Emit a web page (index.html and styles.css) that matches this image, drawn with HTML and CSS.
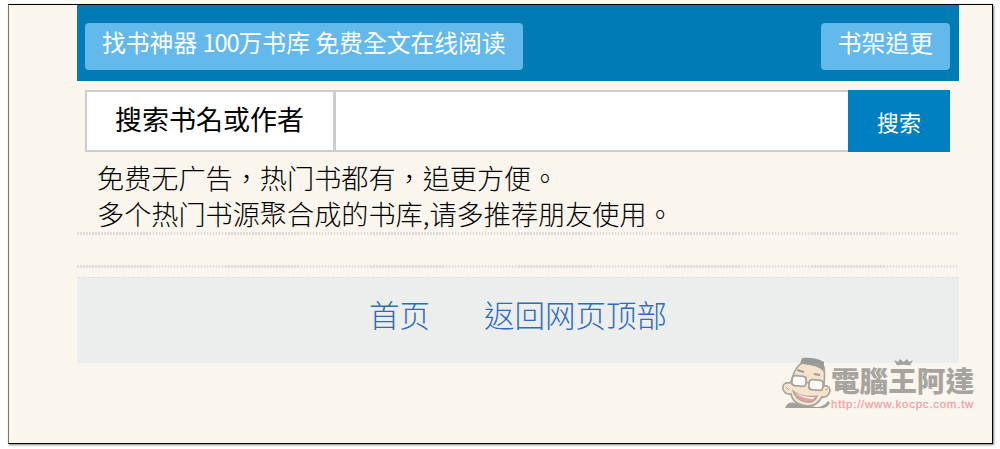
FILE: index.html
```html
<!DOCTYPE html>
<html lang="zh-Hant">
<head>
    <meta charset="UTF-8">
    <meta name="viewport" content="width=device-width, initial-scale=1.0">
    <title>找书神器</title>
    <link rel="stylesheet" href="styles.css">
</head>
<body>
    <div class="page">
        <div class="container">
            <header class="header">
                <a class="tag">找书神器 <span class="num">100</span>万书库 免费全文在线阅读</a>
                <a class="tag">书架追更</a>
            </header>

            <form class="search">
                <label class="search-label" for="keyword">搜索书名或作者</label>
                <input class="search-input" type="text" id="keyword">
                <button class="search-button" type="button">搜索</button>
            </form>

            <div class="intro">
                <p>免费无广告，热门书都有，追更方便。</p>
                <p>多个热门书源聚合成的书库,请多推荐朋友使用。</p>
            </div>
            <div class="divider"></div>

            <footer class="footer">
                <a>首页</a>
                <a>返回网页顶部</a>
            </footer>
        </div>

        <div class="watermark">
            <svg class="face" width="51" height="54" viewBox="0 0 51 54">
                <path d="M3 51 Q6 44 13 46 L34 50 Q42 50 46 44 L48 46 Q45 52 38 51 Z" fill="#4a4a4a"/>
                <path d="M10 22 Q13 10 20 6 L42 10 Q43 16 42 29 Q48 28 48 34 Q46 41 40 40 Q35 49 26 49 Q11 48 9 37 Q3 38 1 32 Q0 25 8 26 Z" fill="#f5d2ad" stroke="#555" stroke-width="1.6"/>
                <path d="M18 7 L20 1 Q33 0 42 5 L42 15 Q34 6 18 7 Z" fill="#444"/>
                <path d="M15 13 L22 15 M32 17 L38 18" stroke="#444" stroke-width="1.9" fill="none"/>
                <g fill="#fff" stroke="#555" stroke-width="1.8">
                    <rect x="10" y="19" width="14" height="10" rx="3" transform="rotate(6 17 24)"/>
                    <rect x="27" y="23" width="14" height="10" rx="3" transform="rotate(6 34 28)"/>
                    <path d="M24 25 L27 26"/>
                </g>
                <path d="M11 34 Q20 41 35 39 Q33 46 24 45 Q14 43 11 34 Z" fill="#e8474d" stroke="#555" stroke-width="1.2"/>
                <path d="M12 35 Q22 41 33 40 L31 42 Q19 41 12 35 Z" fill="#fff"/>
                <path d="M4 30 L7 33 M43 33 L46 32" stroke="#555" fill="none"/>
            </svg>
            <div class="brand">
                <div class="brand-name">電腦王阿達</div>
                <div class="brand-url">http://www.kocpc.com.tw</div>
            </div>
            <svg class="crown" width="21" height="8" viewBox="0 0 21 8">
                <path d="M1 2 L5 4 L7 1 L10.5 4 L14 1 L16 4 L20 2 L17 7.5 Q10.5 6 4 7.5 Z" fill="#555"/>
            </svg>
        </div>
    </div>
</body>
</html>
```
FILE: styles.css
```css
* {
    box-sizing: border-box;
}
body {
    margin: 0;
    height: 449px;
    padding: 4px 7px 5px 8px;
    background: #fff;
    font-family: "Noto Sans CJK TC", sans-serif;
    overflow: hidden;
}
.page {
    position: relative;
    height: 440px;
    background: #fbf6ed;
    border: 1px solid #000;
    border-left-color: #777;
    box-shadow: 1px 1px 2px rgba(0, 0, 0, 0.5);
}
.container {
    width: 882px;
    margin-left: 68px;
}
.header {
    display: flex;
    justify-content: space-between;
    height: 76px;
    padding: 18px 9px 0 8px;
    background: #007bb3;
}
.tag {
    height: 47px;
    padding: 0 17px;
    border-radius: 4px;
    background: #64b9ec;
    color: #fff;
    font-size: 23.8px;
    line-height: 38px;
    white-space: nowrap;
}
.num {
    letter-spacing: -1.2px;
}
.search {
    display: flex;
    height: 62px;
    margin: 9px 9px 0 8px;
}
.search-label {
    width: 250px;
    padding-left: 28px;
    border: 2px solid #ccc;
    background: #fff;
    font-size: 27px;
    line-height: 54px;
}
.search-input {
    flex: 1;
    min-width: 0;
    border: 2px solid #ccc;
    border-width: 2px 0 2px 1px;
    background: #fff;
}
.search-button {
    width: 102px;
    padding: 0;
    border: none;
    background: #007fc1;
    color: #fff;
    font-family: inherit;
    font-size: 22px;
}
.intro,
.divider {
    border-bottom: 3px solid;
    border-image: repeating-linear-gradient(90deg, #e0dddb 0 1.5px, #f5f0e8 1.5px 3px) 3;
    border-image-width: 0 0 3px;
}
.intro {
    height: 83px;
    padding: 8px 0 0 20px;
    color: #000;
    font-size: 27.15px;
    font-weight: 300;
    line-height: 36px;
}
.intro p {
    margin: 0;
}
.divider {
    height: 33px;
}
.footer {
    display: flex;
    justify-content: center;
    gap: 54px;
    height: 86px;
    margin-top: 9px;
    border-top: 1px dashed #dde1e0;
    background: #eceeee;
    color: #2b6cbd;
    font-size: 30.5px;
    font-weight: 300;
    line-height: 73px;
}
.watermark {
    position: absolute;
    left: 773px;
    top: 352px;
    display: flex;
    opacity: 0.5;
}
.brand {
    padding-top: 7px;
    white-space: nowrap;
}
.brand-name {
    margin-left: -2px;
    color: #555;
    font-size: 28.6px;
    font-weight: 900;
    line-height: 32px;
}
.brand-url {
    margin-left: -2px;
    padding-top: 1px;
    color: #f3475c;
    font-family: "Liberation Sans", Arial, sans-serif;
    font-size: 11.5px;
    line-height: 14px;
    letter-spacing: 0.75px;
    -webkit-text-stroke: 0.3px #f3475c;
}
.crown {
    position: absolute;
    left: 111px;
    top: 1px;
}
```
